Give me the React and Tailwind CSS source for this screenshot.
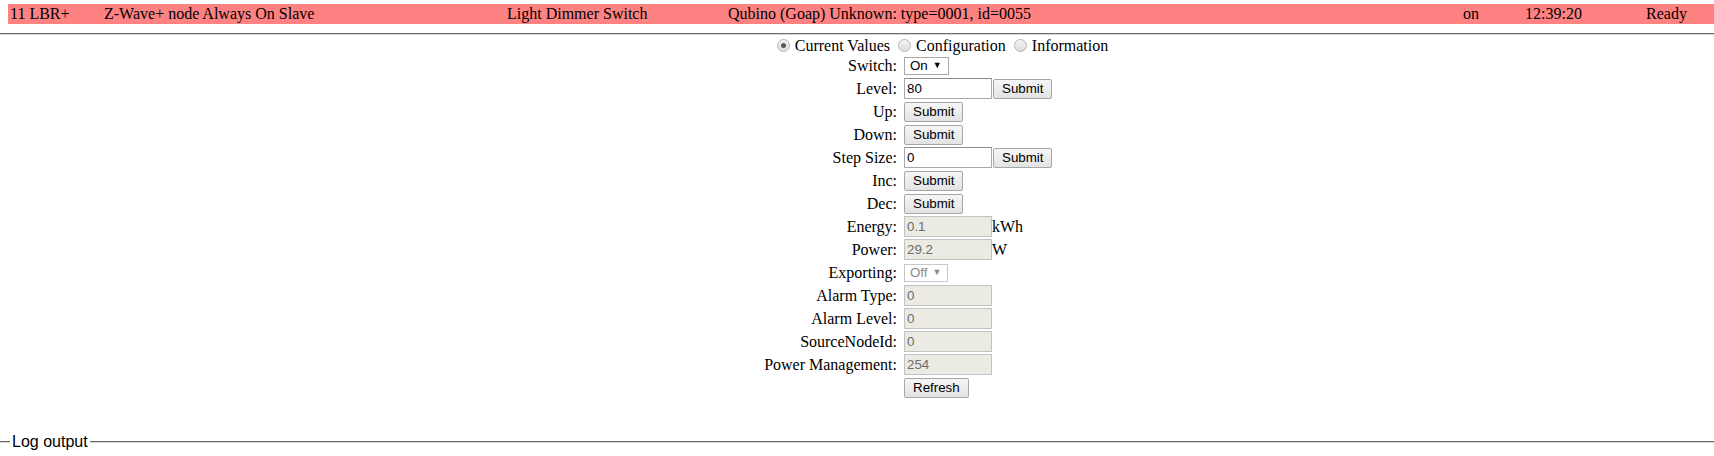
import React from 'react';

const serif = "font-['Liberation_Serif','Times_New_Roman',serif]";
const sans = "font-['Liberation_Sans',Arial,sans-serif]";

const Radio = ({ checked }) => (
  <span className="ml-[5px] mr-[5px] inline-flex h-[13px] w-[13px] items-center justify-center rounded-full border border-[#b5b5b5] bg-gradient-to-b from-[#f4f4f4] to-[#dcdcdc]">
    {checked && <span className="h-[5px] w-[5px] rounded-full bg-[#555]" />}
  </span>
);

const TextBox = ({ value, disabled }) => (
  <input
    readOnly
    value={value}
    className={`h-[21px] w-[88px] border px-[2px] text-[13.33px] outline-none ${sans} ${
      disabled
        ? 'border-[#c2c2c2] bg-[#ebebe4] text-[#6d6d6d]'
        : 'border-[#a9a9a9] border-t-[#8a8a8a] bg-white text-black'
    }`}
  />
);

const Btn = ({ children }) => (
  <button className={`h-[20px] rounded-[2px] border border-[#a6a6a6] bg-gradient-to-b from-[#f6f6f6] to-[#e3e3e3] px-[8px] text-[13.33px] leading-none text-black ${sans}`}>
    {children}
  </button>
);

const Select = ({ value, disabled }) => (
  <span
    className={`inline-flex h-[18px] items-center gap-[5px] border bg-white pl-[5px] pr-[6px] text-[13.33px] ${sans} ${
      disabled ? 'border-[#c8c8c8] text-[#8a8a8a]' : 'border-[#a9a9a9] text-black'
    }`}
  >
    {value}
    <span className="text-[9px] leading-none">▼</span>
  </span>
);

const Row = ({ label, children }) => (
  <div className="flex h-[23px] items-center">
    <span className="w-[134px] shrink-0 text-right text-[16px]">{label}</span>
    <div className="ml-[7px] flex items-center">{children}</div>
  </div>
);

const Line = ({ className = '' }) => (
  <div className={`h-[2px] border-t border-[#6e6e6e] bg-[#d4d4d4] ${className}`} />
);

export default function App() {
  const cells = [
    ['w-[94px]', '11 LBR+'],
    ['w-[403px]', 'Z-Wave+ node Always On Slave'],
    ['w-[221px]', 'Light Dimmer Switch'],
    ['w-[735px]', 'Qubino (Goap) Unknown: type=0001, id=0055'],
    ['w-[62px]', 'on'],
    ['w-[121px]', '12:39:20'],
    ['flex-1', 'Ready'],
  ];

  return (
    <div className={`h-[456px] w-full overflow-hidden bg-white text-black ${serif}`}>
      <div className="h-[4px]" />
      <div className="ml-[8px] flex h-[20px] items-center bg-[#ff8282] pl-[2px] text-[16px] leading-[18px]">
        {cells.map(([w, t]) => (
          <span key={t} className={`${w} shrink-0 whitespace-nowrap`}>
            {t}
          </span>
        ))}
      </div>

      <Line className="mt-[9px]" />

      <div className="pl-[166px]">
        <div className="mt-[2px] flex h-[17px] items-center justify-center text-[16px]">
          <Radio checked />
          <span>Current Values</span>
          <span className="w-[3px]" />
          <Radio />
          <span>Configuration</span>
          <span className="w-[3px]" />
          <Radio />
          <span>Information</span>
        </div>

        <div className="mx-auto w-[354px]">
          <Row label="Switch:">
            <Select value="On" />
          </Row>
          <Row label="Level:">
            <TextBox value="80" />
            <span className="ml-[1px]" />
            <Btn>Submit</Btn>
          </Row>
          <Row label="Up:">
            <Btn>Submit</Btn>
          </Row>
          <Row label="Down:">
            <Btn>Submit</Btn>
          </Row>
          <Row label="Step Size:">
            <TextBox value="0" />
            <span className="ml-[1px]" />
            <Btn>Submit</Btn>
          </Row>
          <Row label="Inc:">
            <Btn>Submit</Btn>
          </Row>
          <Row label="Dec:">
            <Btn>Submit</Btn>
          </Row>
          <Row label="Energy:">
            <TextBox value="0.1" disabled />
            <span className="text-[16px]">kWh</span>
          </Row>
          <Row label="Power:">
            <TextBox value="29.2" disabled />
            <span className="text-[16px]">W</span>
          </Row>
          <Row label="Exporting:">
            <Select value="Off" disabled />
          </Row>
          <Row label="Alarm Type:">
            <TextBox value="0" disabled />
          </Row>
          <Row label="Alarm Level:">
            <TextBox value="0" disabled />
          </Row>
          <Row label="SourceNodeId:">
            <TextBox value="0" disabled />
          </Row>
          <Row label="Power Management:">
            <TextBox value="254" disabled />
          </Row>
          <Row label="">
            <Btn>Refresh</Btn>
          </Row>
        </div>
      </div>

      <div className="mt-[34px] flex h-[18px] items-center">
        <Line className="w-[10px]" />
        <span className={`px-[2px] text-[16px] leading-[18px] ${sans}`}>Log output</span>
        <Line className="flex-1" />
      </div>
    </div>
  );
}
